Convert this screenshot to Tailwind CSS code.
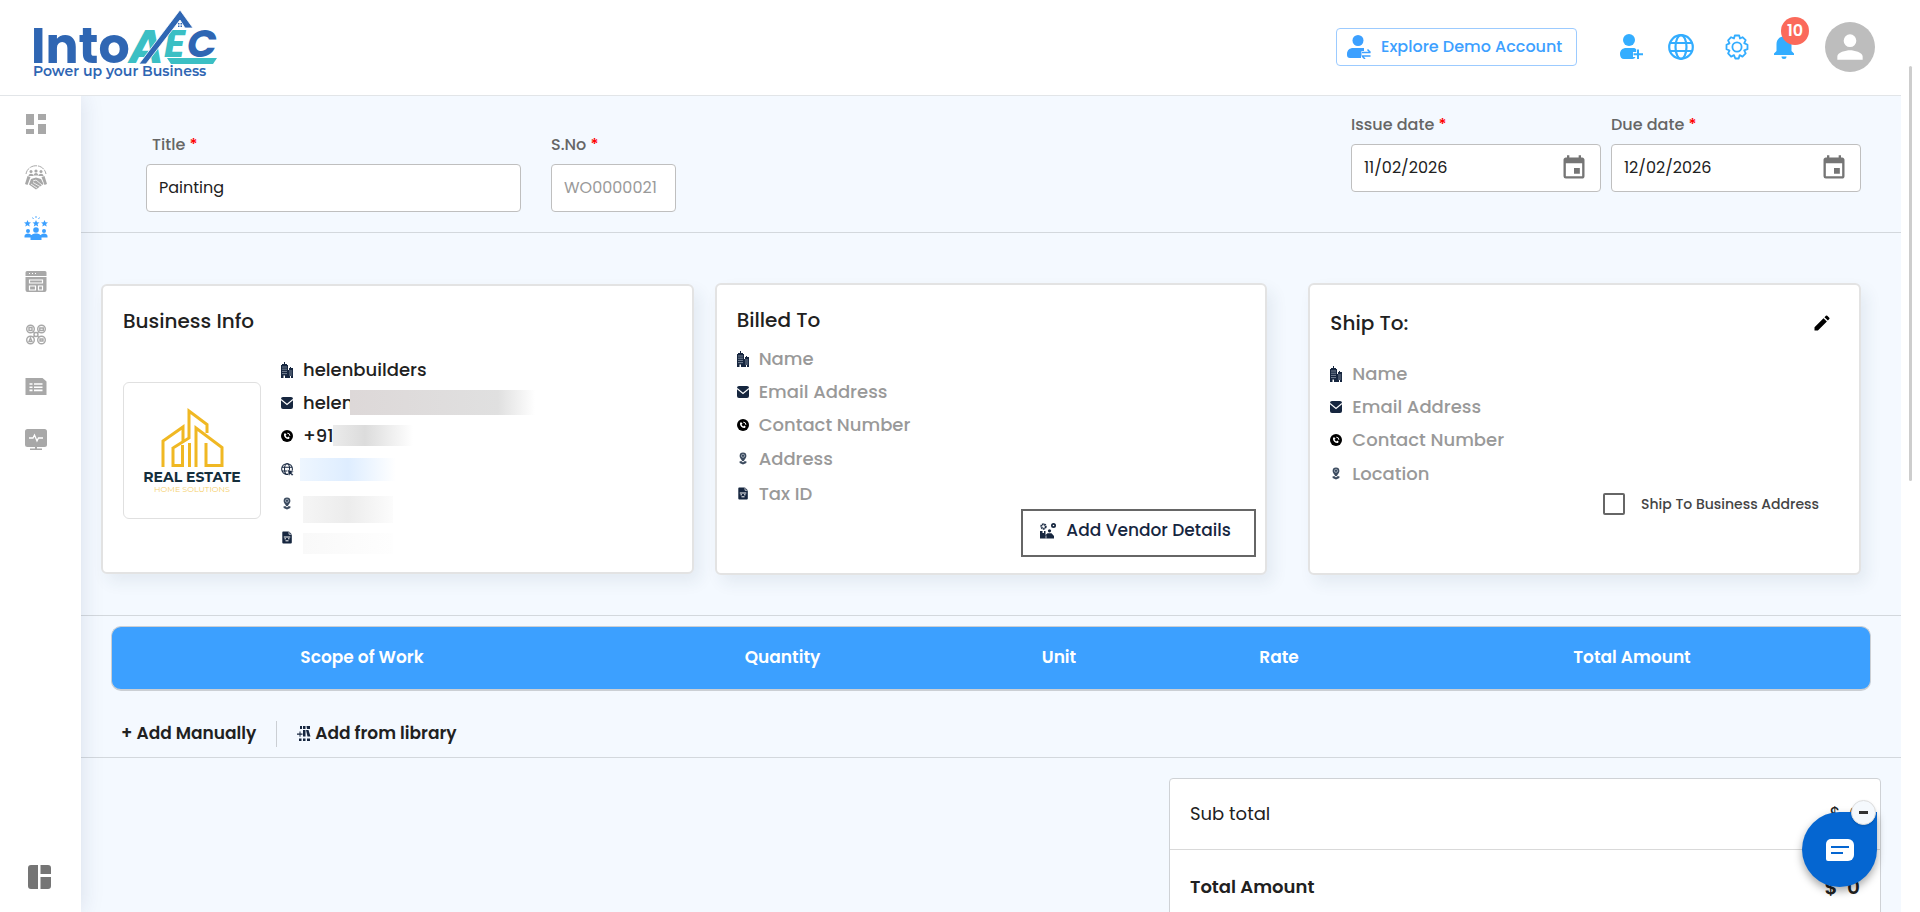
<!DOCTYPE html>
<html lang="en">
<head>
  <meta charset="UTF-8">
  <meta name="viewport" content="width=device-width, initial-scale=1.0">
  <title>IntoAEC - Work Order</title>
  <script src="https://cdn.jsdelivr.net/npm/@tailwindcss/browser@4"></script>
</head>
<body class="flex h-screen overflow-hidden bg-white font-['Poppins','Inter',sans-serif] text-[#212121]">

  <!-- shared icons -->
  <svg class="hidden" aria-hidden="true">
    <symbol id="i-building" viewBox="0 0 12 16">
      <path fill="#16263f" d="M3 0h1v2h2v1h1v13H0V3h1V2h2zM8 8V6h1V5h1v1h2v10H7V8z"/>
      <path stroke="#b9c3cf" stroke-width=".6" d="M1 5h5M1 7.2h5M1 9.4h5M1 11.6h5M8 9h3.200M8 11h3.200M8 13h3.200"/>
      <path fill="#fff" d="M2.5 13.5h1.500V16H2.500zM9 14h1v2H9z"/>
    </symbol>
    <symbol id="i-mail" viewBox="0 0 12 12">
      <rect width="12" height="12" rx="2" fill="#16263f"/>
      <path d="M0 2.5l6 5 6-5" fill="none" stroke="#fff" stroke-width="1.2"/>
    </symbol>
    <symbol id="i-phone" viewBox="0 0 12 12">
      <circle cx="6" cy="6" r="6" fill="#000"/>
      <path d="M3.700 3.700c-.4 3 1.800 5 4.600 4.600M3.700 3.700l1.300 1.500M8.300 8.300L6.800 7" fill="none" stroke="#fff" stroke-width="1.500"/>
      <path d="M6.300 3.200a2.600 2.600 0 0 1 2.600 2.600" fill="none" stroke="#fff" stroke-width="1"/>
    </symbol>
    <symbol id="i-web" viewBox="0 0 14 14">
      <g fill="none" stroke="#16263f" stroke-width="1.100"><circle cx="6.500" cy="6.500" r="5.800"/><ellipse cx="6.500" cy="6.500" rx="2.700" ry="5.800"/><path d="M1 4.500h11M1 8.500h6"/></g>
      <path fill="#16263f" stroke="#fff" stroke-width=".5" d="M7 7l7 2.300-2.700 1.300 2 2-1.300 1.200-2-2L8.600 14z"/>
    </symbol>
    <symbol id="i-pin" viewBox="0 0 12 12">
      <path fill="#3b4a5e" d="M6 0a3.400 3.400 0 0 1 3.400 3.400C9.400 5.200 7.700 6.500 6.800 8.500H5.200C4.300 6.500 2.600 5.200 2.600 3.400A3.400 3.400 0 0 1 6 0z"/>
      <circle cx="6" cy="3.300" r="1.600" fill="#3b4a5e" stroke="#b9c3cf" stroke-width=".7"/>
      <path fill="#3b4a5e" d="M2.600 8.800h2.200L6 10l1.200-1.200h2.200v1.800L6 12l-3.400-1.400z"/>
    </symbol>
    <symbol id="i-tax" viewBox="0 0 12 12">
      <path fill="#16263f" d="M2.500 0H8l2.800 2.800V11a1 1 0 0 1-1 1H2.300a1 1 0 0 1-1-1V1a1 1 0 0 1 1.200-1z"/>
      <path d="M8 0v2.800h2.800" fill="none" stroke="#fff" stroke-width=".7"/>
      <path d="M2.800 5.500h6.500M3.500 7.300h1.500M7 7.300h1.500M4.500 9.300h3" stroke="#fff" stroke-width="1"/>
    </symbol>
    <symbol id="i-calendar" viewBox="0 0 24 24">
      <path fill="#757575" d="M17 12h-5v5h5v-5zM16 1v2H8V1H6v2H5c-1.110 0-1.990.9-1.990 2L3 19a2 2 0 0 0 2 2h14c1.100 0 2-.9 2-2V5c0-1.100-.9-2-2-2h-1V1h-2zm3 18H5V8h14v11z"/>
    </symbol>
  </svg>

  <div class="flex min-w-0 flex-1 flex-col">
    <!-- top bar -->
    <header class="z-20 flex h-24 shrink-0 items-center justify-between border-b border-[#e2e5e8] bg-white pb-0.5 pl-8 pr-[26px]">
      <a href="#" aria-label="IntoAEC home">
        <svg width="192" height="92" viewBox="0 0 192 92">
          <text x="-1" y="62" font-size="49" font-weight="700" fill="#2f66b3">Into</text>
          <text x="97" y="62" font-size="47" font-weight="700" font-style="italic" fill="#3bbfc4">A</text>
          <text x="132" y="56" font-size="39" font-weight="700" font-style="italic" fill="#3bbfc4">E</text>
          <text x="155" y="56" font-size="39" font-weight="700" font-style="italic" fill="#2f66b3">C</text>
          <path d="M135 57h50l-4 6h-42z" fill="#3bbfc4"/>
          <path d="M107 63l41-54 13 18h-8l-5-8-34 44z" fill="#2f66b3" stroke="#fff" stroke-width=".8"/>
          <path d="M146 22h1.500v1.500H146zM148.500 22h1.500v1.500h-1.500zM146 24.500h1.500V26H146zM148.500 24.500h1.500V26h-1.500z" fill="#2f66b3"/>
          <text x="1" y="75" font-size="14" class="font-['Montserrat','Inter',sans-serif] font-semibold" fill="#2f66b3">Power up your Business</text>
        </svg>
      </a>

      <div class="flex items-center">
        <button class="flex h-[38px] w-[241px] items-center gap-[10px] rounded border border-[#9ccbff] pl-[10px] text-base font-medium whitespace-nowrap text-[#3ca0ff]">
          <svg width="24" height="24" viewBox="0 0 24 24" fill="#3ca0ff" class="shrink-0">
            <circle cx="11" cy="5.500" r="5.500"/>
            <path d="M0 19c0-4 3-6 6-6h11v3h-2.500v5H14v2H3a3 3 0 0 1-3-3z"/>
            <path d="M15 17.500h8.500M20.500 14.500l3 3M23.500 21H15M18 24l-3-3" fill="none" stroke="#3ca0ff" stroke-width="1.500"/>
          </svg>
          Explore Demo Account
        </button>
        <button class="ml-[43px]" aria-label="Add user">
          <svg width="24" height="26" viewBox="0 0 24 26" fill="#33adff">
            <circle cx="9" cy="6" r="6"/>
            <path d="M0 20c0-4 3-6 6-6h7c1.500 0 2.500.5 3.200 1.200V18H13v5h2.500c-.6 1.300-1.500 2-3 2H4c-2.500 0-4-2-4-5z"/>
            <path d="M18 15.500v9.500M13.500 20.200H23" fill="none" stroke="#33adff" stroke-width="2"/>
          </svg>
        </button>
        <button class="ml-6" aria-label="Language">
          <svg width="26" height="26" viewBox="0 0 26 26" fill="none" stroke="#33adff" stroke-width="2.200">
            <circle cx="13" cy="13" r="11.800"/><ellipse cx="13" cy="13" rx="5.500" ry="11.800"/><path d="M2 9h22M2 17h22"/>
          </svg>
        </button>
        <button class="ml-[30px]" aria-label="Settings">
          <svg width="26" height="26" viewBox="0 0 26 26" fill="none" stroke="#33adff" stroke-width="1.800" stroke-linejoin="round">
            <path d="M10.800 1.500h4.400l.8 3 2.500-1.300 3.200 3-1.500 2.900 3.300 1.700v4.400l-3.300 1.200 1.500 3-3.200 3.200-2.800-1.500-1 3.400h-3.400l-1.300-3.400-2.900 1.500-3-3.200 1.400-2.900-3-1.300v-4.400l3-1.400-1.400-3.100 3-3.100L10 4.500z"/>
            <circle cx="13" cy="13" r="4.600"/>
          </svg>
        </button>
        <button class="relative ml-[23px]" aria-label="Notifications">
          <svg width="22" height="26" viewBox="0 0 22 26" fill="#33adff">
            <path d="M11 1c1 0 1.600.7 1.600 1.600 3.800.8 5.900 3.700 5.900 7.500v7L21 19.500V21H1v-1.500l2.500-2.400v-7c0-3.800 2.100-6.700 5.900-7.500C9.400 1.700 10 1 11 1zM8.500 22.500h5a2.500 2.500 0 0 1-5 0z"/>
          </svg>
          <span class="absolute -top-[17px] left-2 flex size-7 items-center justify-center rounded-full bg-[#fb6a5b] text-base font-semibold text-white">10</span>
        </button>
        <button class="ml-[30px] flex size-[50px] items-center justify-center rounded-full bg-[#bdbdbd]" aria-label="Profile">
          <svg width="38" height="38" viewBox="0 0 24 24" fill="#fff"><path d="M12 12a4 4 0 1 0 0-8 4 4 0 0 0 0 8zm0 2c-2.670 0-8 1.340-8 4v2h16v-2c0-2.660-5.330-4-8-4z"/></svg>
        </button>
      </div>
    </header>

    <div class="flex min-h-0 flex-1">
      <!-- side menu -->
      <nav class="z-10 flex w-[81px] shrink-0 flex-col items-center bg-white pr-[9px] pt-4 pb-[22px] shadow-[0_0_22px_rgba(30,50,90,0.13)]">
        <a href="#" class="flex h-[52px] items-start" aria-label="Dashboard">
          <svg width="24" height="26" viewBox="0 0 24 26" fill="#a8a8a8"><path d="M2 2h8v11H2zM14 2h8v6h-8zM2 17h8v5H2zM14 12h8v10h-8z"/></svg>
        </a>
        <a href="#" class="flex h-[52px] items-start" aria-label="Clients">
          <svg width="24" height="26" viewBox="0 0 24 26" fill="#a8a8a8">
            <path d="M2 10C4-1 20-1 22 10" fill="none" stroke="#a8a8a8" stroke-width="1" stroke-dasharray="7 1"/>
            <circle cx="7" cy="7.500" r="1.500"/><circle cx="12" cy="7" r="1.600"/><circle cx="17" cy="7.500" r="1.500"/>
            <path d="M4.500 12c0-3 5-3 5 0zM9.600 11.500c0-3.500 4.800-3.500 4.800 0zM14.500 12c0-3 5-3 5 0z"/>
            <path d="M3.500 12l3 1-3 8-2.500-1zM20.500 12l-3 1 3 8 2.500-1zM7 15l5-1.500 5 1.500 2.500 5-7.500 5.500L5 20.500z"/>
            <path d="M9 17l3-1 6 5M7 20l6 4M9 18.500l7 4" stroke="#fff" stroke-width=".8" fill="none"/>
          </svg>
        </a>
        <a href="#" class="flex h-[53px] items-start" aria-label="Vendors">
          <svg width="24" height="26" viewBox="0 0 24 26" fill="#3ca0ff">
            <path d="M3.500 4l1 2.300 2.500.2-1.900 1.600.6 2.500-2.200-1.400-2.200 1.400.6-2.500L0 6.500l2.500-.2zM12 4l1 2.300 2.500.2-1.900 1.600.6 2.500L12 9.200l-2.200 1.400.6-2.500-1.900-1.600 2.500-.2zM20.500 4l1 2.300 2.500.2-1.900 1.600.6 2.500-2.200-1.400-2.200 1.400.6-2.500L17 6.500l2.500-.2z"/>
            <path d="M12 0v2M8.500 1.500l1 1.500M15.500 1.500l-1 1.500" stroke="#3ca0ff" stroke-width=".9"/>
            <circle cx="4" cy="15" r="2"/><circle cx="12" cy="14" r="2.800"/><circle cx="20" cy="15" r="2"/>
            <path d="M.5 21.500v-1.500c0-3.500 7-3.500 7 0v1.500zM16.500 21.500v-1.500c0-3.500 7-3.500 7 0v1.500zM6.500 24v-2.500c0-5.500 11-5.500 11 0V24z"/>
          </svg>
        </a>
        <a href="#" class="flex h-[52px] items-start" aria-label="Projects">
          <svg width="24" height="26" viewBox="0 0 24 26">
            <path fill="#a8a8a8" d="M3 2h18a1.500 1.500 0 0 1 1.500 1.500V7h-21V3.500A1.500 1.500 0 0 1 3 2zM1.500 8h21v13a2 2 0 0 1-2 2h-17a2 2 0 0 1-2-2z"/>
            <path d="M5.500 11h13v3h-13zM5.500 17h6v4h-6zM14.500 17h4v4h-4z" fill="none" stroke="#fff" stroke-width="1.200"/>
            <path d="M5 4.500h1M8 4.500h1M11 4.500h1" stroke="#fff"/>
          </svg>
        </a>
        <a href="#" class="flex h-[52px] items-start" aria-label="Teams">
          <svg width="24" height="26" viewBox="0 0 24 26" fill="none" stroke="#a8a8a8" stroke-width="1.400">
            <circle cx="6.500" cy="8" r="3.800"/><circle cx="17.500" cy="8" r="3.800"/><circle cx="6.500" cy="19" r="3.800"/><circle cx="17.500" cy="19" r="3.800"/><circle cx="12" cy="13.500" r="2"/>
            <path d="M9 10.500l1.500 1.300M15 10.500l-1.500 1.300M9 16.500l1.500-1.500M15 16.500L13.500 15M5 6.500h3v3H5zM15.800 7h3.500v2.500h-3.500zM6.500 17l-1.500 3.500h3zM16 18h3v2h-3z"/>
          </svg>
        </a>
        <a href="#" class="flex h-[52px] items-start" aria-label="Reports">
          <svg width="24" height="26" viewBox="0 0 24 26">
            <path fill="#a8a8a8" d="M1.500 5h17l4 3.500V22h-21z"/>
            <path d="M5.500 11h3M10 11h8.500M5.500 14.200h3M10 14.200h8.500M5.500 17.400h3M10 17.400h8.500" stroke="#fff" stroke-width="1.600"/>
          </svg>
        </a>
        <a href="#" class="flex h-[52px] items-start" aria-label="Activity">
          <svg width="24" height="26" viewBox="0 0 24 26">
            <rect x="1" y="4" width="22" height="18" rx="2.500" fill="#a8a8a8"/>
            <path d="M5 13h4l1.500-3 2.500 6 1.500-3H19" fill="none" stroke="#fff" stroke-width="1.300"/>
            <path d="M11 22h2v1.500h5V25H6v-1.500h5z" fill="#a8a8a8"/>
          </svg>
        </a>
        <button class="mt-auto ml-2" aria-label="Toggle layout">
          <svg width="26" height="26" viewBox="0 0 26 26" fill="#757575"><path d="M4 1h7v24H4a3 3 0 0 1-3-3V4a3 3 0 0 1 3-3zM13.500 1H21a3 3 0 0 1 3 3v6H13.500zM13.500 13H24v9a3 3 0 0 1-3 3h-7.500z"/></svg>
        </button>
      </nav>

      <main class="min-w-0 flex-1 overflow-hidden bg-[#f4f9ff]">
        <!-- order details -->
        <section class="flex h-[137px] justify-between border-b border-[#d3d8dd] pl-[65px] pr-10">
          <div class="flex gap-[30px] pt-9">
            <div>
              <label for="title" class="block pl-[6px] text-base leading-[26px] font-medium text-[#666]">Title <span class="text-[#f00]">*</span></label>
              <input id="title" type="text" value="Painting" class="mt-[6px] block h-12 w-[375px] rounded border border-[#bfbfbf] bg-white px-3 pb-0.5 text-base">
            </div>
            <div>
              <label for="sno" class="block text-base leading-[26px] font-medium text-[#666]">S.No <span class="text-[#f00]">*</span></label>
              <input id="sno" type="text" value="WO0000021" disabled class="mt-[6px] block h-12 w-[125px] rounded border border-[#bfbfbf] bg-white px-3 pb-0.5 text-base text-[#9a9a9a]">
            </div>
          </div>
          <div class="flex gap-[10px] pt-4">
            <div>
              <label for="issue" class="block text-base leading-[26px] font-medium text-[#666]">Issue date <span class="text-[#f00]">*</span></label>
              <div class="mt-[6px] flex h-12 w-[250px] items-center rounded border border-[#bfbfbf] bg-white px-3">
                <input id="issue" type="text" value="11/02/2026" class="min-w-0 flex-1 text-base">
                <button aria-label="Pick issue date"><svg width="28" height="28"><use href="#i-calendar"/></svg></button>
              </div>
            </div>
            <div>
              <label for="due" class="block text-base leading-[26px] font-medium text-[#666]">Due date <span class="text-[#f00]">*</span></label>
              <div class="mt-[6px] flex h-12 w-[250px] items-center rounded border border-[#bfbfbf] bg-white px-3">
                <input id="due" type="text" value="12/02/2026" class="min-w-0 flex-1 text-base">
                <button aria-label="Pick due date"><svg width="28" height="28"><use href="#i-calendar"/></svg></button>
              </div>
            </div>
          </div>
        </section>

        <!-- parties -->
        <section class="grid h-[383px] grid-cols-[593fr_553fr_573fr] items-start gap-[21px] border-b border-[#d3d8dd] pt-[50px] pl-5 pr-10">
          <div class="mt-px h-[290px] rounded-md border-2 border-[#e3e3e3] bg-white px-5 pt-[21px] shadow-[6px_8px_16px_rgba(40,70,90,0.08)]">
            <h2 class="text-xl leading-7 font-medium">Business Info</h2>
            <div class="mt-[18px] flex gap-5">
              <div class="mt-[29px] flex h-[137px] w-[138px] shrink-0 items-center justify-center rounded-md border border-[#e0e0e0]">
                <svg width="110" height="90" viewBox="0 0 110 90" class="font-['Montserrat','Inter',sans-serif]">
                  <path d="M26 61V35l20-14v15M36 42l16-10V5l18 13.500V27M36 41v18.500h9.500V39M52.500 37v24M59 61V22l26 19.500v18H69V37" fill="none" stroke="#f0b823" stroke-width="3"/>
                  <text x="55" y="76" text-anchor="middle" font-size="14" font-weight="700" fill="#142e3c">REAL ESTATE</text>
                  <text x="55" y="86" text-anchor="middle" font-size="8" fill="#f5cf6c">HOME SOLUTIONS</text>
                </svg>
              </div>
              <ul class="text-lg font-medium">
                <li class="flex h-[33px] items-center gap-[10px]"><svg width="12" height="16"><use href="#i-building"/></svg>helenbuilders</li>
                <li class="flex h-[33px] items-center gap-[10px]"><svg width="12" height="12"><use href="#i-mail"/></svg>
                  <span class="flex items-center"><span class="w-[47px]">helen</span><span class="h-[25px] w-[185px] bg-linear-to-r from-[#ddd8d8] via-[#e0e0e0] via-80% to-white"></span></span></li>
                <li class="flex h-[33px] items-center gap-[10px]"><svg width="12" height="12"><use href="#i-phone"/></svg>
                  <span class="flex items-center"><span class="w-[30px]">+91</span><span class="h-[21px] w-[80px] bg-linear-to-r from-[#ebebeb] via-[#dcdcdc] via-40% to-white"></span></span></li>
                <li class="flex h-[35px] items-center gap-[10px]"><svg width="13" height="13"><use href="#i-web"/></svg>
                  <span class="-ml-1 h-[23px] w-[96px] bg-linear-to-r from-[#eef6ff] via-[#deedff] via-50% to-white"></span></li>
                <li class="flex h-[33px] items-center gap-[10px]"><svg width="12" height="13"><use href="#i-pin"/></svg>
                  <span class="mt-3 h-[27px] w-[90px] bg-linear-to-r from-[#f5f5f5] via-[#ececec] via-50% to-[#fcfcfc]"></span></li>
                <li class="flex h-[35px] items-center gap-[10px]"><svg width="12" height="13"><use href="#i-tax"/></svg>
                  <span class="mt-3 h-[21px] w-[90px] bg-linear-to-r from-[#f9f9f9] to-[#fefefe]"></span></li>
              </ul>
            </div>
          </div>

          <div class="flex h-[292px] flex-col rounded-md border-2 border-[#e3e3e3] bg-white pt-[21px] pr-[9px] pl-5 shadow-[6px_8px_16px_rgba(40,70,90,0.08)]">
            <h2 class="text-xl leading-7 font-medium">Billed To</h2>
            <ul class="mt-2 text-lg font-medium text-[#999]">
              <li class="flex h-[33px] items-center gap-[10px]"><svg width="12" height="16"><use href="#i-building"/></svg>Name</li>
              <li class="flex h-[33px] items-center gap-[10px]"><svg width="12" height="12"><use href="#i-mail"/></svg>Email Address</li>
              <li class="flex h-[33px] items-center gap-[10px]"><svg width="12" height="12"><use href="#i-phone"/></svg>Contact Number</li>
              <li class="flex h-[35px] items-center gap-[10px]"><svg width="12" height="13"><use href="#i-pin"/></svg>Address</li>
              <li class="flex h-[35px] items-center gap-[10px]"><svg width="12" height="13"><use href="#i-tax"/></svg>Tax ID</li>
            </ul>
            <button class="-mt-0.5 flex h-12 w-[235px] shrink-0 items-center gap-[10px] self-end border-2 border-[#666] pb-1 pl-[17px] text-[17px] font-medium whitespace-nowrap text-[#16263f]">
              <svg width="16" height="16" viewBox="0 0 16 16" fill="#16263f" class="shrink-0">
                <circle cx="3.500" cy="3.500" r="2.200" fill="none" stroke="#16263f" stroke-width="2" stroke-dasharray="1.500 .5"/>
                <circle cx="13.500" cy="2.500" r="2.500"/><circle cx="13.500" cy="2.500" r=".8" fill="#fff"/>
                <circle cx="9.500" cy="7.800" r="1.600"/><path d="M0 8h2.500v2H4V8h1.500v4l2-1.800h4L14 13v2.500H0z"/><path d="M6 15.500v-3" stroke="#fff" stroke-width=".7"/>
              </svg>
              Add Vendor Details
            </button>
          </div>

          <div class="ml-5 h-[292px] rounded-md border-2 border-[#e3e3e3] bg-white pt-6 pr-7 pl-5 shadow-[6px_8px_16px_rgba(40,70,90,0.08)]">
            <div class="flex items-center justify-between">
              <h2 class="text-xl leading-7 font-medium">Ship To:</h2>
              <button aria-label="Edit shipping address">
                <svg width="18" height="18" viewBox="0 0 24 24"><path d="M2 17.500V22h4.500L18.500 10 14 5.500zM21.700 6.800a1.300 1.300 0 0 0 0-1.800L19 2.300a1.300 1.300 0 0 0-1.800 0L15.300 4.200l4.500 4.500z"/></svg>
              </button>
            </div>
            <ul class="mt-5 text-lg font-medium text-[#999]">
              <li class="flex h-[33px] items-center gap-[10px]"><svg width="12" height="16"><use href="#i-building"/></svg>Name</li>
              <li class="flex h-[33px] items-center gap-[10px]"><svg width="12" height="12"><use href="#i-mail"/></svg>Email Address</li>
              <li class="flex h-[33px] items-center gap-[10px]"><svg width="12" height="12"><use href="#i-phone"/></svg>Contact Number</li>
              <li class="flex h-[35px] items-center gap-[10px]"><svg width="12" height="13"><use href="#i-pin"/></svg>Location</li>
            </ul>
            <div class="mt-0.5 flex items-center justify-end gap-4 pr-3">
              <input id="same" type="checkbox" class="size-[22px] appearance-none rounded-xs border-2 border-[#666]">
              <label for="same" class="text-sm font-medium text-[#444]">Ship To Business Address</label>
            </div>
          </div>
        </section>

        <!-- scope table -->
        <section class="border-b border-[#d3d8dd] px-[30px] pt-[10px]">
          <div class="overflow-hidden rounded-[10px] border border-b-2 border-[#cbcfd4] bg-[#3ca0ff]">
            <table class="h-[62px] w-full table-fixed text-[17px] text-white">
              <thead>
                <tr>
                  <th class="w-[500px] font-semibold">Scope of Work</th>
                  <th class="w-[341px] font-semibold">Quantity</th>
                  <th class="w-[212px] font-semibold">Unit</th>
                  <th class="w-[228px] font-semibold">Rate</th>
                  <th class="w-[478px] font-semibold">Total Amount</th>
                </tr>
              </thead>
            </table>
          </div>
          <div class="flex h-[66px] items-center pt-5 pl-[10px] text-[17px] font-semibold">
            <button>+ Add Manually</button>
            <span class="mx-5 h-[26px] w-px bg-[#cbcfd4]"></span>
            <button class="flex items-center gap-1">
              <svg width="14" height="16" viewBox="0 0 14 16" fill="#16263f">
                <path d="M3 0h2v3H3zM6 0h2.500v3H6zM9.500 0H13v3h-3zM6 4h2.500v6.500H6zM9 4h2.500l2 6.500h-3zM2 12.500h2.500V15H2zM6 12.500h2.500V15H6zM10 12.500h3V15h-3zM2.500 5.500h1v2h2v1.200h-2v2h-1v-2H0V7.500h2.500z"/>
              </svg>
              Add from library
            </button>
          </div>
        </section>

        <!-- totals -->
        <section class="flex justify-end pt-5 pr-5">
          <div class="w-[712px] rounded border border-[#cfd2d6] bg-white">
            <div class="flex h-[71px] items-center justify-between border-b border-[#d9d9d9] px-5 text-lg">
              <span>Sub total</span><span class="text-[17px]">$ &nbsp;0</span>
            </div>
            <div class="flex h-[73px] items-center justify-between px-5 text-lg font-semibold">
              <span>Total Amount</span><span class="text-xl">$ &nbsp;0</span>
            </div>
          </div>
        </section>
      </main>
    </div>
  </div>

  <!-- scroll gutter -->
  <div class="w-[19px] shrink-0 bg-white pt-[66px] pl-2">
    <div class="h-[415px] w-[3px] rounded-full bg-[#cdcdcd]"></div>
  </div>

  <!-- chat launcher -->
  <div class="fixed right-[43px] bottom-[25px] z-30 size-[75px]">
    <button class="flex size-full items-center justify-center rounded-full rounded-tr-lg bg-[#0566d1] shadow-[0_4px_8px_rgba(0,0,0,0.35)]" aria-label="Open chat">
      <svg width="30" height="24" viewBox="0 0 30 24">
        <path fill="#fff" d="M6 1h17a6 6 0 0 1 6 6v10a6 6 0 0 1-6 6H3a2 2 0 0 1-2-2V6a5 5 0 0 1 5-5z"/>
        <path d="M6 9h18M6 15h12" stroke="#0566d1" stroke-width="2"/>
      </svg>
    </button>
    <button class="absolute -top-3 right-px flex size-[25px] items-center justify-center rounded-full border border-[#ddd] bg-[#f5f9fd] shadow" aria-label="Minimize chat">
      <span class="h-[3px] w-[9px] bg-[#333]"></span>
    </button>
  </div>
</body>
</html>
